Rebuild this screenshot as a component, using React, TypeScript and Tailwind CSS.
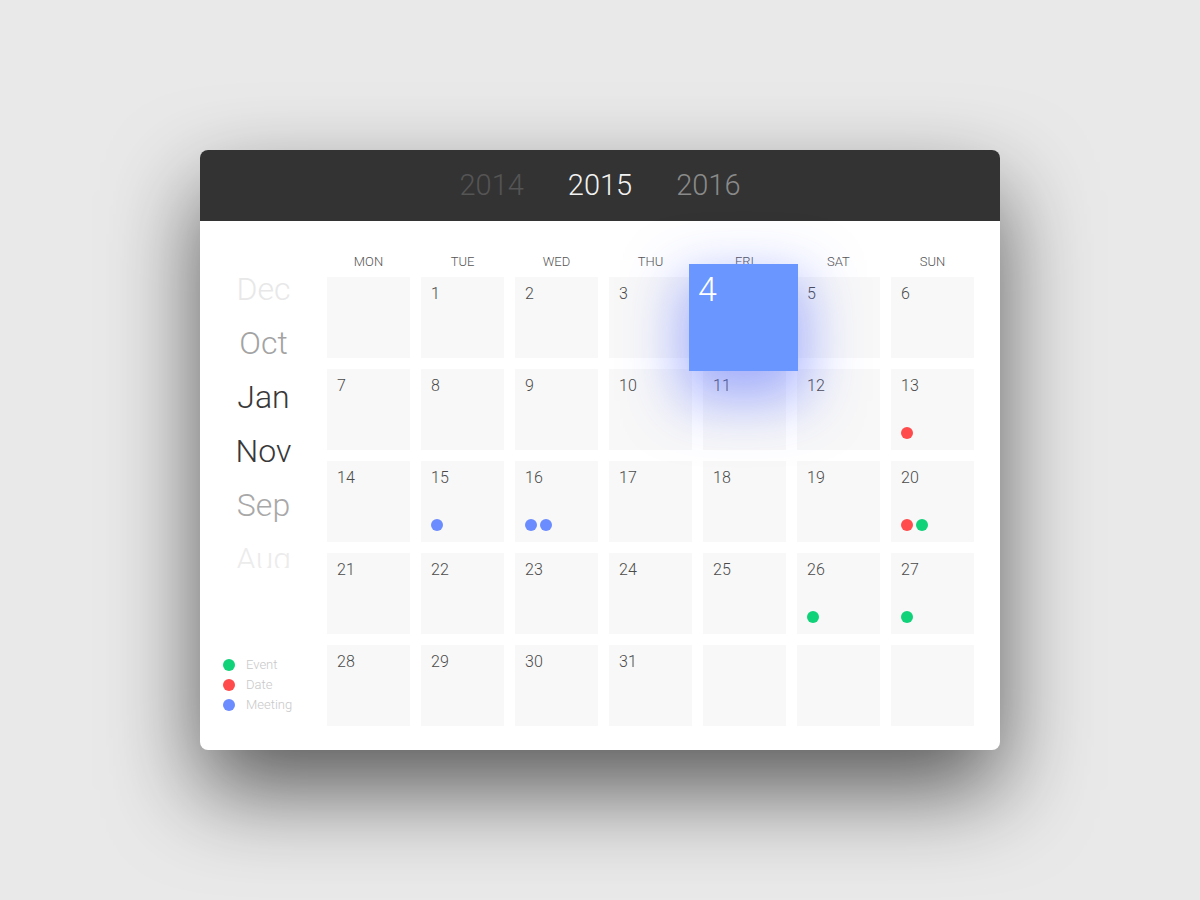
import React from 'react'

const years = [
  { y: '2014', c: 'text-[#555555]' },
  { y: '2015', c: 'text-[#f2f2f2]' },
  { y: '2016', c: 'text-[#8a8a8a]' },
]

const months = [
  { m: 'Dec', c: 'text-[#e8e8e8]' },
  { m: 'Oct', c: 'text-[#a3a3a3]' },
  { m: 'Jan', c: 'text-[#383838]' },
  { m: 'Nov', c: 'text-[#383838]' },
  { m: 'Sep', c: 'text-[#a8a8a8]' },
  { m: 'Aug', c: 'text-[#ececec]' },
]

const weekdays = ['MON', 'TUE', 'WED', 'THU', 'FRI', 'SAT', 'SUN']

const dotColor = {
  event: 'bg-[#0fd279]',
  date: 'bg-[#ff4b4b]',
  meeting: 'bg-[#6b8cff]',
}

type Kind = keyof typeof dotColor

const marks: Record<number, Kind[]> = {
  13: ['date'],
  15: ['meeting'],
  16: ['meeting', 'meeting'],
  20: ['date', 'event'],
  26: ['event'],
  27: ['event'],
}

// the mockup starts the month on a Tuesday
const cells: (number | null)[] = [null, ...Array.from({ length: 31 }, (_, i) => i + 1)]
while (cells.length < 35) cells.push(null)

function DayCell({ day }: { day: number | null }) {
  const dots = day ? marks[day] : undefined
  return (
    <div className="relative h-[81px] w-[83px] bg-[#f8f8f8]">
      {day && (
        <span className="absolute left-[10px] top-[9px] text-[16px] leading-[16px] font-light text-[#4a4a4a]">
          {day}
        </span>
      )}
      {dots && (
        <div className="absolute left-[10px] top-[58px] flex gap-[3px]">
          {dots.map((k, i) => (
            <span key={i} className={`block h-[12px] w-[12px] rounded-full ${dotColor[k]}`} />
          ))}
        </div>
      )}
      {day === 4 && (
        <div className="absolute -left-[14px] -top-[13px] z-10 h-[107px] w-[109px] bg-[#6a96ff] shadow-[0_22px_55px_8px_rgba(75,100,255,0.5)]">
          <span className="absolute left-[9px] top-[8px] text-[34px] leading-[34px] font-light text-white">4</span>
        </div>
      )}
    </div>
  )
}

export default function App() {
  return (
    <div
      className="flex h-[900px] w-full items-start justify-center bg-[#e9e9e9] pt-[150px]"
      style={{ fontFamily: 'Roboto, "Liberation Sans", sans-serif' }}
    >
      <div className="w-[800px] rounded-[8px] bg-white shadow-[0_40px_90px_0_rgba(0,0,0,0.62)]">
        {/* year switcher */}
        <div className="flex h-[71px] items-center justify-center gap-[44px] rounded-t-[8px] bg-[#333333]">
          {years.map((y) => (
            <span key={y.y} className={`text-[29px] font-light ${y.c}`}>
              {y.y}
            </span>
          ))}
        </div>

        <div className="flex pt-[32px] pb-[24px] pr-[26px]">
          {/* months + legend */}
          <div className="flex w-[127px] flex-col">
            <div className="mt-[9px] h-[306px] overflow-hidden">
              {months.map((m) => (
                <div key={m.m} className={`h-[54px] text-center text-[32px] leading-[54px] font-light ${m.c}`}>
                  {m.m}
                </div>
              ))}
            </div>
            <div className="mt-auto mb-[14px] flex flex-col gap-[6px] pl-[23px]">
              {(
                [
                  ['event', 'Event'],
                  ['date', 'Date'],
                  ['meeting', 'Meeting'],
                ] as [Kind, string][]
              ).map(([k, label]) => (
                <div key={k} className="flex h-[14px] items-center gap-[11px]">
                  <span className={`block h-[12px] w-[12px] rounded-full ${dotColor[k]}`} />
                  <span className="text-[13px] font-light text-[#c8c8c8]">{label}</span>
                </div>
              ))}
            </div>
          </div>

          {/* calendar grid */}
          <div className="flex flex-col">
            <div className="grid grid-cols-[repeat(7,83px)] gap-x-[11px]">
              {weekdays.map((d) => (
                <div key={d} className="h-[18px] text-center text-[13px] leading-[18px] font-light text-[#555555]">
                  {d}
                </div>
              ))}
            </div>
            <div className="mt-[6px] grid grid-cols-[repeat(7,83px)] gap-[11px]">
              {cells.map((d, i) => (
                <DayCell key={i} day={d} />
              ))}
            </div>
          </div>
        </div>
      </div>
    </div>
  )
}
